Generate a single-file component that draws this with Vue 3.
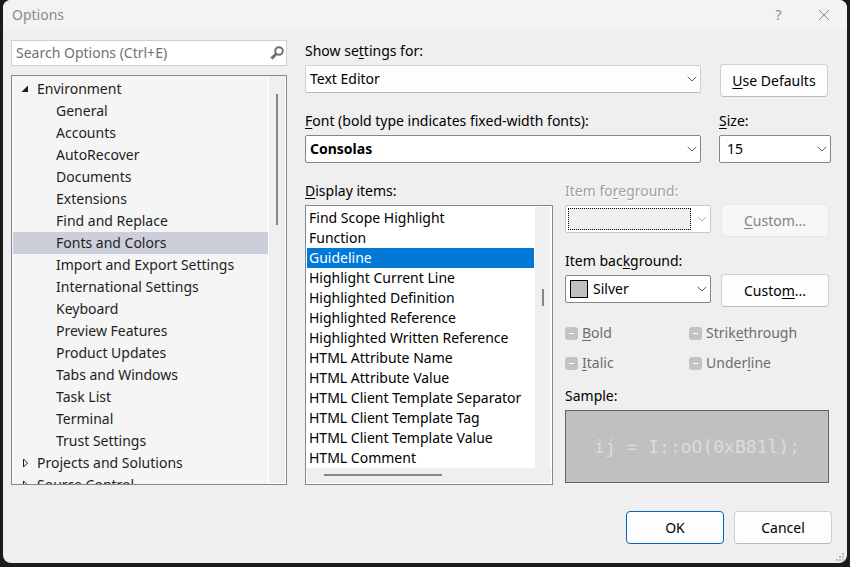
<script setup>
import { ref } from 'vue'

const environment = [
  'General', 'Accounts', 'AutoRecover', 'Documents', 'Extensions',
  'Find and Replace', 'Fonts and Colors', 'Import and Export Settings',
  'International Settings', 'Keyboard', 'Preview Features', 'Product Updates',
  'Tabs and Windows', 'Task List', 'Terminal', 'Trust Settings'
]
const collapsed = ['Projects and Solutions', 'Source Control']
const page = ref('Fonts and Colors')

const items = [
  'Find Scope Highlight', 'Function', 'Guideline', 'Highlight Current Line',
  'Highlighted Definition', 'Highlighted Reference',
  'Highlighted Written Reference', 'HTML Attribute Name',
  'HTML Attribute Value', 'HTML Client Template Separator',
  'HTML Client Template Tag', 'HTML Client Template Value', 'HTML Comment'
]
const item = ref('Guideline')

const styles = [
  { id: 'bold', pre: '', key: 'B', post: 'old' },
  { id: 'strike', pre: 'Strik', key: 'e', post: 'through' },
  { id: 'italic', pre: '', key: 'I', post: 'talic' },
  { id: 'underline', pre: 'Under', key: 'l', post: 'ine' }
]
</script>

<template>
  <main class="dialog">
    <header class="titlebar">
      <h1>Options</h1>
      <button class="caption" type="button" aria-label="Help">?</button>
      <button class="caption" type="button" aria-label="Close">
        <svg width="12" height="12" viewBox="0 0 12 12"><path d="M1 1L11 11M11 1L1 11" /></svg>
      </button>
    </header>

    <div class="content">
      <nav class="sidebar">
        <div class="search">
          <input type="text" aria-label="Search Options" placeholder="Search Options (Ctrl+E)">
          <svg width="14" height="14" viewBox="0 0 14 14">
            <circle cx="9" cy="5" r="3.8" />
            <path d="M6.3 7.8L1.5 12.6" />
          </svg>
        </div>
        <div class="tree">
          <ul role="tree">
            <li role="treeitem" aria-expanded="true">
              <div class="node">
                <svg width="8" height="8" viewBox="0 0 8 8"><path class="solid" d="M7 0.5V7H0.5Z" /></svg>
                Environment
              </div>
              <ul role="group">
                <li
                  v-for="name in environment"
                  :key="name"
                  role="treeitem"
                  class="leaf"
                  :class="{ selected: name === page }"
                  :aria-selected="name === page"
                  @click="page = name"
                >{{ name }}</li>
              </ul>
            </li>
            <li v-for="name in collapsed" :key="name" role="treeitem" aria-expanded="false">
              <div class="node">
                <svg width="8" height="10" viewBox="0 0 8 10"><path class="outline" d="M2.5 1V9L6.5 5Z" /></svg>
                {{ name }}
              </div>
            </li>
          </ul>
          <div class="vtrack"><span class="tree-thumb"></span></div>
        </div>
      </nav>

      <form class="settings" @submit.prevent>
        <div class="row top">
          <div class="field">
            <label for="scope">Show se<u>t</u>tings for:</label>
            <div class="combo light">
              <select id="scope"><option>Text Editor</option></select>
              <svg class="chevron" width="10" height="6" viewBox="0 0 10 6"><path d="M0.7 0.8L5 5L9.3 0.8" /></svg>
            </div>
          </div>
          <button class="btn" type="button"><span><u>U</u>se Defaults</span></button>
        </div>

        <div class="row top">
          <div class="field">
            <label for="font"><u>F</u>ont (bold type indicates fixed-width fonts):</label>
            <div class="combo">
              <select id="font" class="fixed-width"><option>Consolas</option></select>
              <svg class="chevron" width="10" height="6" viewBox="0 0 10 6"><path d="M0.7 0.8L5 5L9.3 0.8" /></svg>
            </div>
          </div>
          <div class="field">
            <label for="size"><u>S</u>ize:</label>
            <div class="combo">
              <select id="size" class="size"><option>15</option></select>
              <svg class="chevron" width="10" height="6" viewBox="0 0 10 6"><path d="M0.7 0.8L5 5L9.3 0.8" /></svg>
            </div>
          </div>
        </div>

        <div class="lower">
          <div class="field">
            <label id="items-label"><u>D</u>isplay items:</label>
            <div class="listbox">
              <ul role="listbox" aria-labelledby="items-label" tabindex="0">
                <li
                  v-for="name in items"
                  :key="name"
                  role="option"
                  :class="{ selected: name === item }"
                  :aria-selected="name === item"
                  @click="item = name"
                >{{ name }}</li>
              </ul>
              <div class="vtrack"><span class="list-thumb"></span></div>
              <div class="htrack"><span></span></div>
            </div>
          </div>

          <div class="appearance">
            <div class="row colors">
              <div class="field">
                <label for="fg" class="etched">Item fo<u>r</u>eground:</label>
                <div class="combo off">
                  <select id="fg" disabled><option></option></select>
                  <span class="focus-box"></span>
                  <svg class="chevron" width="10" height="6" viewBox="0 0 10 6"><path d="M0.7 0.8L5 5L9.3 0.8" /></svg>
                </div>
              </div>
              <button class="btn" type="button" disabled><span><u>C</u>ustom...</span></button>
            </div>

            <div class="row colors">
              <div class="field">
                <label for="bg">Item bac<u>k</u>ground:</label>
                <div class="combo">
                  <select id="bg" class="with-swatch"><option>Silver</option></select>
                  <span class="swatch"></span>
                  <svg class="chevron" width="10" height="6" viewBox="0 0 10 6"><path d="M0.7 0.8L5 5L9.3 0.8" /></svg>
                </div>
              </div>
              <button class="btn" type="button"><span>Custo<u>m</u>...</span></button>
            </div>

            <div class="checks">
              <label v-for="s in styles" :key="s.id" :for="s.id">
                <input :id="s.id" type="checkbox" :indeterminate="true" disabled>
                <span>{{ s.pre }}<u>{{ s.key }}</u>{{ s.post }}</span>
              </label>
            </div>

            <div class="field sample-field">
              <span>Sample:</span>
              <output class="sample">ij = I::oO(0xB81l);</output>
            </div>
          </div>
        </div>
      </form>
    </div>

    <footer class="actions">
      <button class="btn default" type="button">OK</button>
      <button class="btn" type="button">Cancel</button>
    </footer>

    <svg class="grip" width="8" height="8" viewBox="0 0 8 8">
      <path d="M6 0h2v2h-2zM3 3h2v2h-2zM6 3h2v2h-2zM0 6h2v2h-2zM3 6h2v2h-2zM6 6h2v2h-2z" />
    </svg>
  </main>
</template>

<style>
body {
  margin: 0;
  background: #1b1b1b;
}
</style>

<style scoped>
* {
  box-sizing: border-box;
}

.dialog {
  position: relative;
  display: flex;
  flex-direction: column;
  min-height: calc(100vh - 4px);
  margin: 0 3px 4px;
  overflow: hidden;
  border-radius: 8px;
  background: #efefef;
  color: #000;
  font: 14px/20px "Noto Sans", "Open Sans", sans-serif;
}

ul {
  margin: 0;
  padding: 0;
  list-style: none;
}

u {
  text-underline-offset: 2px;
  text-decoration-thickness: 1px;
  text-decoration-skip-ink: none;
}

button,
input,
select {
  font: inherit;
  color: inherit;
}

.titlebar {
  display: flex;
  align-items: center;
  height: 30px;
  padding: 0 8px 0 9px;
  background: #f3f3f3;
  color: #8b8b8b;
}

.titlebar h1 {
  flex: 1;
  margin: 0;
  font-size: 14px;
  font-weight: 400;
}

.caption {
  display: grid;
  place-items: center;
  width: 45px;
  height: 28px;
  padding: 0;
  border: 0;
  background: none;
}

.caption:last-child {
  width: 30px;
  margin-left: 8px;
}

.caption svg {
  fill: none;
  stroke: #8b8b8b;
}

.content {
  display: flex;
  gap: 18px;
  padding: 10px 16px 0 8px;
}

.sidebar {
  display: flex;
  flex: 0 0 276px;
  flex-direction: column;
  gap: 9px;
}

.search {
  display: flex;
  align-items: center;
  height: 26px;
  padding-right: 2px;
  border: 1px solid #cccedb;
  background: #fff;
}

.search input {
  flex: 1;
  min-width: 0;
  padding: 0 4px;
  border: 0;
  outline: 0;
  background: none;
}

.search input::placeholder {
  color: #717171;
  opacity: 1;
}

.search svg {
  fill: none;
  stroke: #717171;
  stroke-width: 2;
}

.search path {
  stroke-width: 3;
}

.tree {
  display: flex;
  flex: 1 1 0;
  min-height: 0;
  overflow: hidden;
  border: 1px solid #828790;
  background: #f5f5f5;
  color: #1e1e1e;
  line-height: 22px;
}

.tree > ul {
  flex: 1;
  height: 0;
  padding: 2px 0 0 1px;
}

.node {
  display: flex;
  align-items: center;
  gap: 8px;
  height: 22px;
  padding-left: 8px;
}

.solid {
  fill: #1e1e1e;
}

.outline {
  fill: none;
  stroke: #1e1e1e;
}

.leaf {
  height: 22px;
  padding-left: 43px;
}

.leaf.selected {
  background: #cccedb;
}

.vtrack {
  width: 18px;
  padding-left: 7px;
  border: solid #fff;
  border-width: 0 1px 1px;
  background: #efefef;
}

.tree-thumb,
.list-thumb {
  display: block;
  width: 2px;
  height: 131px;
  margin-top: 18px;
  background: #868686;
}

.settings {
  display: flex;
  flex: 1;
  flex-direction: column;
  gap: 18px;
  min-width: 0;
  padding-top: 1px;
}

.row {
  display: grid;
  align-items: end;
}

.top {
  grid-template-columns: 1fr 112px;
  gap: 18px;
}

.field {
  display: flex;
  flex-direction: column;
  gap: 4px;
  min-width: 0;
}

.combo {
  display: grid;
  align-items: center;
  height: 28px;
  border: 1px solid #868686;
  border-radius: 2px;
  background: #fff;
}

.combo > * {
  grid-area: 1 / 1;
}

.combo select {
  width: 100%;
  height: 26px;
  padding: 0 24px 0 4px;
  border: 0;
  appearance: none;
  background: none;
}

.combo.light {
  border-color: #d0d0d0 #d0d0d0 #b8b8b8;
  background: #fdfdfd;
}

.combo.off {
  border-color: #c8c8c8;
}

.combo .fixed-width {
  font-weight: 700;
}

.combo .size {
  padding-left: 7px;
}

.combo .with-swatch {
  padding-left: 27px;
}

.chevron {
  justify-self: end;
  margin-right: 3px;
  fill: none;
  stroke: #5f5f5f;
  pointer-events: none;
}

.off .chevron {
  stroke: #b4b4b4;
}

.swatch {
  width: 18px;
  height: 18px;
  margin-left: 4px;
  border: 1px solid #000;
  background: #c0c0c0;
  pointer-events: none;
}

.focus-box {
  height: 22px;
  margin: 0 19px 0 2px;
  border: 1px dotted #000;
  background: #efefef;
}

.etched {
  color: #a0a0a0;
  text-shadow: 1px 1px 0 #fff;
}

.btn {
  height: 33px;
  padding: 0 8px;
  border: 1px solid #d0d0d0;
  border-bottom-color: #bababa;
  border-radius: 4px;
  background: #fdfdfd;
}

.row .btn {
  width: 108px;
  margin: 0 0 -4px 1px;
}

.btn:disabled {
  border-color: #e6e6e6;
  background: #f7f7f7;
  color: #838383;
}

.btn.default {
  border-color: #0067c0;
}

.lower {
  display: grid;
  grid-template-columns: 248px 1fr;
  gap: 12px;
}

.listbox {
  display: grid;
  grid-template-columns: 1fr 17px;
  grid-template-rows: auto 15px;
  padding: 1px;
  border: 1px solid #828790;
  background: #fff;
}

.listbox ul {
  padding-top: 1px;
  outline: 0;
}

.listbox li {
  height: 20px;
  padding-left: 2px;
  white-space: nowrap;
}

.listbox li.selected {
  background: #0078d7;
  color: #fff;
}

.listbox .vtrack {
  width: 17px;
  border-bottom: 0;
}

.list-thumb {
  height: 17px;
  margin-top: 82px;
}

.htrack {
  grid-column: 1 / -1;
  padding: 6px 0 0 17px;
  background: #efefef;
}

.htrack span {
  display: block;
  width: 118px;
  height: 2px;
  background: #868686;
}

.appearance {
  display: flex;
  flex-direction: column;
  padding: 0 2px 2px 0;
}

.colors {
  grid-template-columns: 1fr 109px;
  gap: 9px;
}

.colors + .colors {
  margin-top: 18px;
}

.checks {
  display: grid;
  grid-template-columns: 124px 1fr;
  row-gap: 10px;
  padding-top: 20px;
  color: #6d6d6d;
}

.checks label {
  display: flex;
  align-items: center;
  gap: 4px;
}

.checks input {
  display: grid;
  place-items: center;
  width: 13px;
  height: 13px;
  margin: 0;
  appearance: none;
  border-radius: 3px;
  background: #c3c3c3;
}

.checks input::before {
  content: "";
  width: 5px;
  height: 1px;
  background: #fff;
}

.sample-field {
  flex: 1;
  padding-top: 13px;
}

.sample {
  display: grid;
  flex: 1;
  place-items: center;
  border: 1px solid #646464;
  background: #c0c0c0;
  color: #dcdcdc;
  font: 18px/24px "DejaVu Sans Mono", monospace;
}

.actions {
  display: flex;
  justify-content: flex-end;
  gap: 10px;
  padding: 26px 15px 19px;
}

.actions .btn {
  width: 98px;
}

.grip {
  position: absolute;
  right: 3px;
  bottom: 2px;
  fill: #bcbcbc;
}
</style>
